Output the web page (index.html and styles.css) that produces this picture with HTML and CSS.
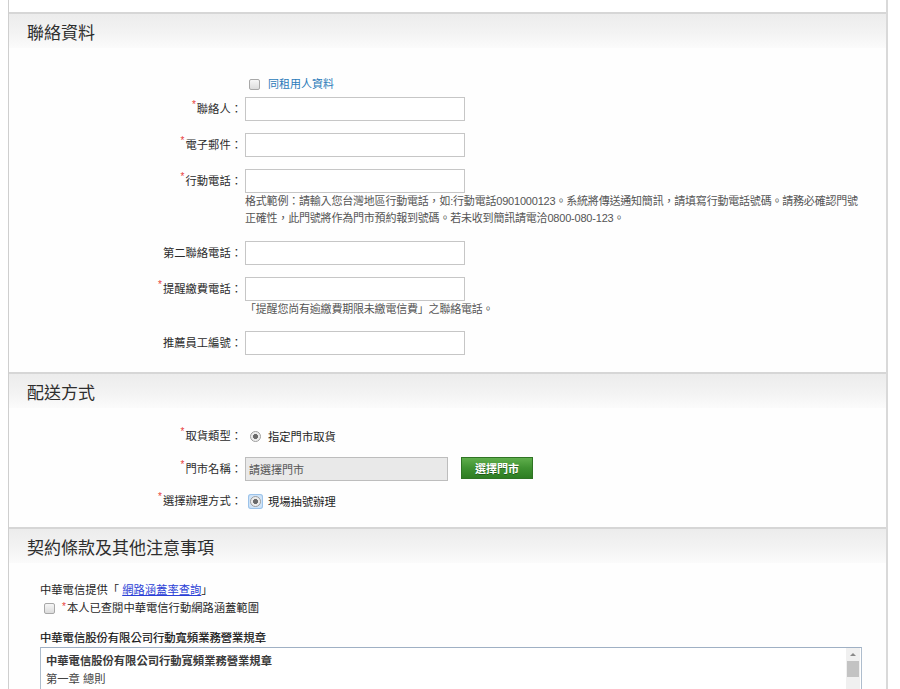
FILE: index.html
```html
<!DOCTYPE html>
<html lang="zh-Hant">
<head>
<meta charset="utf-8">
<title>聯絡資料</title>
<link rel="stylesheet" href="styles.css">
</head>
<body>
<div class="page">
  <div class="top-gap"></div>

  <section class="sec">
    <h2 class="sec-hd">聯絡資料</h2>
    <div class="sec-bd contact">
      <div class="row row-check">
        <div class="lbl"></div>
        <div class="fld"><label class="chk-line"><input type="checkbox" class="chk"><span class="blue">同租用人資料</span></label></div>
      </div>
      <div class="row"><div class="lbl"><span class="req">*</span>聯絡人：</div><div class="fld"><input class="txt" type="text"></div></div>
      <div class="row"><div class="lbl"><span class="req">*</span>電子郵件：</div><div class="fld"><input class="txt" type="text"></div></div>
      <div class="row row-help1"><div class="lbl"><span class="req">*</span>行動電話：</div><div class="fld"><input class="txt" type="text"><p class="help">格式範例：請輸入您台灣地區行動電話，如:行動電話0901000123。系統將傳送通知簡訊，請填寫行動電話號碼。請務必確認門號正確性，此門號將作為門市預約報到號碼。若未收到簡訊請電洽0800-080-123。</p></div></div>
      <div class="row"><div class="lbl">第二聯絡電話：</div><div class="fld"><input class="txt" type="text"></div></div>
      <div class="row row-help2"><div class="lbl"><span class="req">*</span>提醒繳費電話：</div><div class="fld"><input class="txt" type="text"><p class="help">「提醒您尚有逾繳費期限未繳電信費」之聯絡電話。</p></div></div>
      <div class="row row-last"><div class="lbl">推薦員工編號：</div><div class="fld"><input class="txt" type="text"></div></div>
    </div>
  </section>

  <section class="sec">
    <h2 class="sec-hd">配送方式</h2>
    <div class="sec-bd delivery">
      <div class="row r1"><div class="lbl"><span class="req">*</span>取貨類型：</div><div class="fld line"><input type="radio" class="rad" checked><span class="opt">指定門市取貨</span></div></div>
      <div class="row r2"><div class="lbl"><span class="req">*</span>門市名稱：</div><div class="fld line"><input class="txt store" type="text" value="請選擇門市" readonly><button class="btn-green" type="button">選擇門市</button></div></div>
      <div class="row r3"><div class="lbl"><span class="req">*</span>選擇辦理方式：</div><div class="fld line"><span class="rad-focus"><input type="radio" class="rad" checked></span><span class="opt">現場抽號辦理</span></div></div>
    </div>
  </section>

  <section class="sec">
    <h2 class="sec-hd">契約條款及其他注意事項</h2>
    <div class="sec-bd terms">
      <p class="t-line">中華電信提供「 <a href="#" class="link">網路涵蓋率查詢</a>」</p>
      <label class="t-line t-check"><input type="checkbox" class="chk"><span class="req req-inline">*</span>本人已查閱中華電信行動網路涵蓋範圍</label>
      <p class="t-head">中華電信股份有限公司行動寬頻業務營業規章</p>
      <div class="scroll-box">
        <div class="scroll-content">
          <p class="sc-title">中華電信股份有限公司行動寬頻業務營業規章</p>
          <p class="sc-text">第一章 總則</p>
        </div>
        <div class="fake-bar">
          <span class="bar-up"></span>
          <span class="bar-thumb"></span>
        </div>
      </div>
    </div>
  </section>
</div>
</body>
</html>
```

FILE: styles.css
```css
html, body {
  margin: 0;
  padding: 0;
  background: #ffffff;
}

body {
  font-family: "Liberation Sans", "Noto Sans CJK TC", sans-serif;
  font-size: 11px;
  color: #333;
}

p { margin: 0; }

.page {
  margin-left: 8px;
  width: 877px;
  border-left: 1px solid #cfcfcf;
  border-right: 2px solid #d9d9d9;
  background: #fefefe;
}

.top-gap {
  height: 12px;
  background: #fff;
}

.sec-hd {
  margin: 0;
  height: 32px;
  padding-top: 2px;
  border-top: 2px solid #d6d6d6;
  background: linear-gradient(to bottom, #ececec 0%, #f3f3f3 55%, #fbfbfb 100%);
  padding-left: 18px;
  font-size: 17px;
  line-height: 36px;
  font-weight: normal;
  color: #2e2e2e;
}

.sec-bd {
  background: #fefefe;
}

/* rows */
.row {
  display: flex;
  align-items: flex-start;
  margin-bottom: 12px;
}

.lbl {
  width: 233px;
  flex: none;
  text-align: right;
  line-height: 24px;
  font-size: 11.3px;
  color: #2b2b2b;
  white-space: nowrap;
}

.fld {
  margin-left: 3px;
  flex: 1;
  min-width: 0;
}

.req {
  color: #e8413a;
  font-size: 10px;
  vertical-align: top;
  line-height: 15px;
  margin-right: 1px;
}

.txt {
  display: block;
  box-sizing: border-box;
  width: 220px;
  height: 24px;
  margin: 0;
  border: 1px solid #c6c6c6;
  background: #fff;
  font-family: inherit;
  font-size: 11px;
  padding: 0 3px;
}

.help {
  font-size: 11px;
  line-height: 17px;
  color: #555;
  width: 620px;
  letter-spacing: -0.2px;
}

/* contact section */
.contact {
  padding-top: 27px;
  padding-bottom: 17px;
}

.row-check {
  margin-bottom: 4px;
}
.row-check .lbl,
.row-check .fld {
  line-height: 18px;
}

.chk-line {
  display: flex;
  align-items: center;
  height: 18px;
}

.chk {
  -webkit-appearance: none;
  appearance: none;
  box-sizing: border-box;
  width: 11px;
  height: 11px;
  margin: 0 8px 0 4px;
  border: 1px solid #a8a8a8;
  border-radius: 2px;
  background: linear-gradient(to bottom, #f6f6f6, #dcdcdc);
  flex: none;
}

.blue {
  color: #2b7bb9;
  font-size: 11px;
}

.row-help1 { margin-bottom: 14px; }
.row-help2 { margin-bottom: 13px; }
.row-last { margin-bottom: 0; }

/* delivery */
.delivery {
  padding-top: 16px;
  padding-bottom: 14px;
}
.delivery .r1 { margin-bottom: 9px; }
.delivery .r2 { margin-bottom: 8px; }
.delivery .r3 { margin-bottom: 0; }

.line {
  display: flex;
  align-items: center;
  height: 24px;
}

.rad {
  -webkit-appearance: none;
  appearance: none;
  box-sizing: border-box;
  width: 11px;
  height: 11px;
  margin: 0 7px 0 5px;
  border: 1px solid #9d9d9d;
  border-radius: 50%;
  background: radial-gradient(circle, #6a6a6a 0 2.2px, #e9e9e9 2.8px, #f8f8f8 100%);
  flex: none;
}

.rad-focus {
  display: inline-flex;
  align-items: center;
  justify-content: center;
  width: 15px;
  height: 15px;
  margin: 0 5px 0 3px;
  border-radius: 3px;
  background: #cfe3f7;
  box-shadow: inset 0 0 0 1px #9cc3ea;
}
.rad-focus .rad {
  margin: 0;
}

.opt {
  color: #1e1e1e;
  font-size: 11.3px;
}

.store {
  width: 203px;
  background: #e9e9e9;
  border-color: #bdbdbd;
  color: #555;
}

.btn-green {
  margin-left: 13px;
  width: 72px;
  height: 22px;
  box-sizing: border-box;
  border: 1px solid #2f7424;
  background: linear-gradient(to bottom, #5fae4c 0%, #3f9231 50%, #2e7d22 100%);
  color: #fff;
  font-family: inherit;
  font-size: 11px;
  font-weight: bold;
  text-shadow: 0 1px 0 rgba(0, 0, 0, 0.35);
  padding: 0;
  align-self: flex-start;
}

/* terms */
.terms {
  padding: 18px 24px 0 31px;
}

.t-line {
  display: block;
  line-height: 18px;
  height: 18px;
  color: #1e1e1e;
  font-size: 11.3px;
}

.link {
  color: #2b3fd6;
  text-decoration: underline;
}

.t-check {
  display: flex;
  align-items: center;
}
.t-check .chk {
  margin: 0 7px 0 4px;
}
.req-inline {
  font-size: 10px;
  line-height: 10px;
  align-self: flex-start;
  margin-top: 3px;
  margin-right: 1px;
}

.t-head {
  margin-top: 12px;
  line-height: 18px;
  color: #111;
  font-size: 11.3px;
  font-weight: normal;
  -webkit-text-stroke: 0.2px #111;
}

.scroll-box {
  display: flex;
  width: 822px;
  height: 120px;
  box-sizing: border-box;
  border: 1px solid #aebdcd;
  border-top-color: #9fb0c4;
  background: #fff;
  overflow: hidden;
}

.scroll-content {
  flex: 1;
  padding: 4px 5px 0 5px;
  overflow: hidden;
}

.sc-title {
  line-height: 18px;
  font-weight: bold;
  color: #3a3a3a;
  font-size: 11.3px;
}

.sc-text {
  line-height: 18px;
  color: #444;
  font-size: 11.3px;
}

.fake-bar {
  width: 14px;
  flex: none;
  background: #f0f0f0;
  display: flex;
  flex-direction: column;
  align-items: center;
  margin-right: 1px;
}

.bar-up {
  display: block;
  width: 0;
  height: 0;
  margin-top: 5px;
  border-left: 3px solid transparent;
  border-right: 3px solid transparent;
  border-bottom: 3px solid #8a8a8a;
}

.bar-thumb {
  display: block;
  width: 12px;
  height: 16px;
  margin-top: 5px;
  background: #c3c3c3;
}
```
